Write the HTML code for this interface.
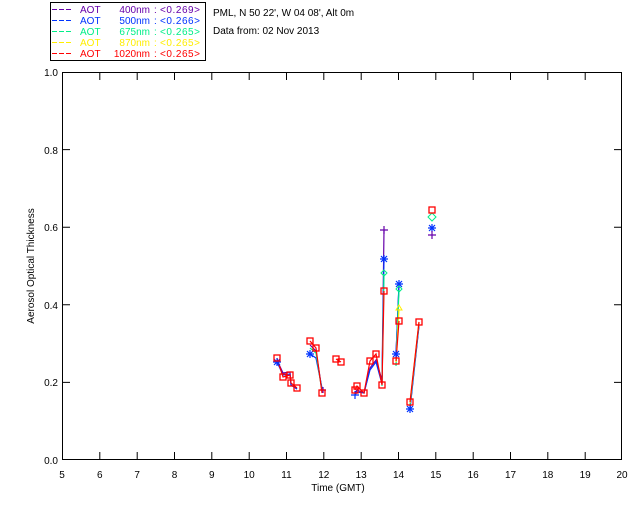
<!DOCTYPE html>
<html><head><style>
body{margin:0;background:#fff;width:640px;height:512px;overflow:hidden}
svg text{font-family:"Liberation Sans",sans-serif;font-size:10px}
</style></head><body>
<svg width="640" height="512" xmlns="http://www.w3.org/2000/svg">
<rect width="640" height="512" fill="#fff"/>
<rect x="50.5" y="2.5" width="155" height="58" fill="none" stroke="#000"/>
<g stroke-dasharray="5 2" stroke-width="1">
<path d="M52 9.5h21" stroke="#6600aa"/><path d="M52 20.5h21" stroke="#0033ff"/><path d="M52 31.5h21" stroke="#00ee88"/><path d="M52 42.5h21" stroke="#ffee00"/><path d="M52 53.5h21" stroke="#ff0000"/>
</g>
<g font-size="11">
<g fill="#6600aa"><text x="80" y="13">AOT</text><text x="150" y="13" text-anchor="end">400nm</text><text x="154" y="13">:</text><text x="160" y="13" textLength="40">&lt;0.269&gt;</text></g>
<g fill="#0033ff"><text x="80" y="24">AOT</text><text x="150" y="24" text-anchor="end">500nm</text><text x="154" y="24">:</text><text x="160" y="24" textLength="40">&lt;0.266&gt;</text></g>
<g fill="#00ee88"><text x="80" y="35">AOT</text><text x="150" y="35" text-anchor="end">675nm</text><text x="154" y="35">:</text><text x="160" y="35" textLength="40">&lt;0.265&gt;</text></g>
<g fill="#ffee00"><text x="80" y="46">AOT</text><text x="150" y="46" text-anchor="end">870nm</text><text x="154" y="46">:</text><text x="160" y="46" textLength="40">&lt;0.265&gt;</text></g>
<g fill="#ff0000"><text x="80" y="57">AOT</text><text x="150" y="57" text-anchor="end">1020nm</text><text x="154" y="57">:</text><text x="160" y="57" textLength="40">&lt;0.265&gt;</text></g>
</g>
<text x="213" y="16" font-size="11">PML, N 50 22', W 04 08', Alt 0m</text>
<text x="213" y="34" font-size="11">Data from: 02 Nov 2013</text>
<rect x="62.5" y="72.5" width="559" height="387" fill="none" stroke="#000"/>
<g stroke="#000">
<path d="M99.8 460v-8M137.2 460v-8M174.5 460v-8M211.8 460v-8M249.2 460v-8M286.5 460v-8M323.8 460v-8M361.2 460v-8M398.5 460v-8M435.8 460v-8M473.2 460v-8M510.5 460v-8M547.8 460v-8M585.2 460v-8"/>
<path d="M99.8 72v8M137.2 72v8M174.5 72v8M211.8 72v8M249.2 72v8M286.5 72v8M323.8 72v8M361.2 72v8M398.5 72v8M435.8 72v8M473.2 72v8M510.5 72v8M547.8 72v8M585.2 72v8"/>
<path d="M62 382.4h8M62 304.8h8M62 227.2h8M62 149.6h8M622 382.4h-8M622 304.8h-8M622 227.2h-8M622 149.6h-8"/>
</g>
<g font-size="10" text-anchor="end">
<text x="58" y="464">0.0</text><text x="58" y="386">0.2</text><text x="58" y="309">0.4</text><text x="58" y="231">0.6</text><text x="58" y="154">0.8</text><text x="58" y="76">1.0</text>
</g>
<g font-size="10" text-anchor="middle">
<text x="62" y="478">5</text><text x="99.8" y="478">6</text><text x="137.2" y="478">7</text><text x="174.5" y="478">8</text><text x="211.8" y="478">9</text><text x="249.2" y="478">10</text><text x="286.5" y="478">11</text><text x="323.8" y="478">12</text><text x="361.2" y="478">13</text><text x="398.5" y="478">14</text><text x="435.8" y="478">15</text><text x="473.2" y="478">16</text><text x="510.5" y="478">17</text><text x="547.8" y="478">18</text><text x="585.2" y="478">19</text><text x="622" y="478">20</text>
<text x="338" y="491">Time (GMT)</text>
</g>
<text transform="translate(34,266) rotate(-90)" text-anchor="middle" font-size="10">Aerosol Optical Thickness</text>
<g fill="none" stroke-width="1.2">
<g stroke="#6600aa"><polyline points="277,360 283,373 290,372 291,385 297,389"/><polyline points="310,345 316,351 322,390"/><polyline points="355,393 357,390 364,393 370,368 376,360 382,380 384,230"/><polyline points="396,354 399,285"/><polyline points="410,408 419,325"/></g>
<g stroke="#0033ff"><polyline points="277,362 283,375 290,374 291,385 297,389"/><polyline points="310,354 316,358 322,388"/><polyline points="355,395 357,392 364,393 370,370 376,362 382,384 384,259"/><polyline points="396,354 399,284"/><polyline points="410,409 419,326"/></g>
<g stroke="#00ee88"><polyline points="310,348 316,353 322,391"/><polyline points="384,274 382,386"/><polyline points="396,366 399,290"/><polyline points="410,405 419,323"/></g>
<g stroke="#ffee00"><polyline points="410,403 419,322"/><polyline points="396,362 399,309"/></g>
<g stroke="#ff0000"><polyline points="277,358 283,377 290,375 291,383 297,388"/><polyline points="310,341 316,348 322,393"/><polyline points="336,359 341,362"/><polyline points="355,390 357,386 364,393 370,361 376,354 382,385 384,291"/><polyline points="396,361 399,321"/><polyline points="410,402 419,322"/></g>
</g>
<g stroke="#0033ff" stroke-width="1.2" fill="none">
<path d="M380 259h8M384 255v8M381 256l6 6M387 256l-6 6M428 228h8M432 224v8M429 225l6 6M435 225l-6 6M395 284h8M399 280v8M396 281l6 6M402 281l-6 6M392 354h8M396 350v8M393 351l6 6M399 351l-6 6M306 354h8M310 350v8M307 351l6 6M313 351l-6 6M273 362h8M277 358v8M274 359l6 6M280 359l-6 6M351 395h8M355 391v8M406 409h8M410 405v8M407 406l6 6M413 406l-6 6"/>
</g>
<path stroke="#6600aa" d="M380 230h8M384 226v8M428 235h8M432 231v8M320 390h6M323 387v6" stroke-width="1.2"/>
<path fill="none" stroke="#00ee88" d="M432 213l4 4-4 4-4-4zM384 270l3 3-3 3-3-3zM399 286l3 3-3 3-3-3z"/>
<path fill="none" stroke="#ffee00" d="M399 305l3 5h-6z"/>
<g fill="none" stroke="#ff0000" stroke-width="1.3">
<rect x="274" y="355" width="6" height="6"/><rect x="280" y="374" width="6" height="6"/><rect x="287" y="372" width="6" height="6"/><rect x="288" y="380" width="6" height="6"/><rect x="294" y="385" width="6" height="6"/><rect x="307" y="338" width="6" height="6"/><rect x="313" y="345" width="6" height="6"/><rect x="319" y="390" width="6" height="6"/><rect x="333" y="356" width="6" height="6"/><rect x="338" y="359" width="6" height="6"/><rect x="352" y="387" width="6" height="6"/><rect x="354" y="383" width="6" height="6"/><rect x="361" y="390" width="6" height="6"/><rect x="367" y="358" width="6" height="6"/><rect x="373" y="351" width="6" height="6"/><rect x="379" y="382" width="6" height="6"/><rect x="381" y="288" width="6" height="6"/><rect x="393" y="358" width="6" height="6"/><rect x="396" y="318" width="6" height="6"/><rect x="407" y="399" width="6" height="6"/><rect x="416" y="319" width="6" height="6"/><rect x="429" y="207" width="6" height="6"/>
</g>
</svg>
</body></html>
